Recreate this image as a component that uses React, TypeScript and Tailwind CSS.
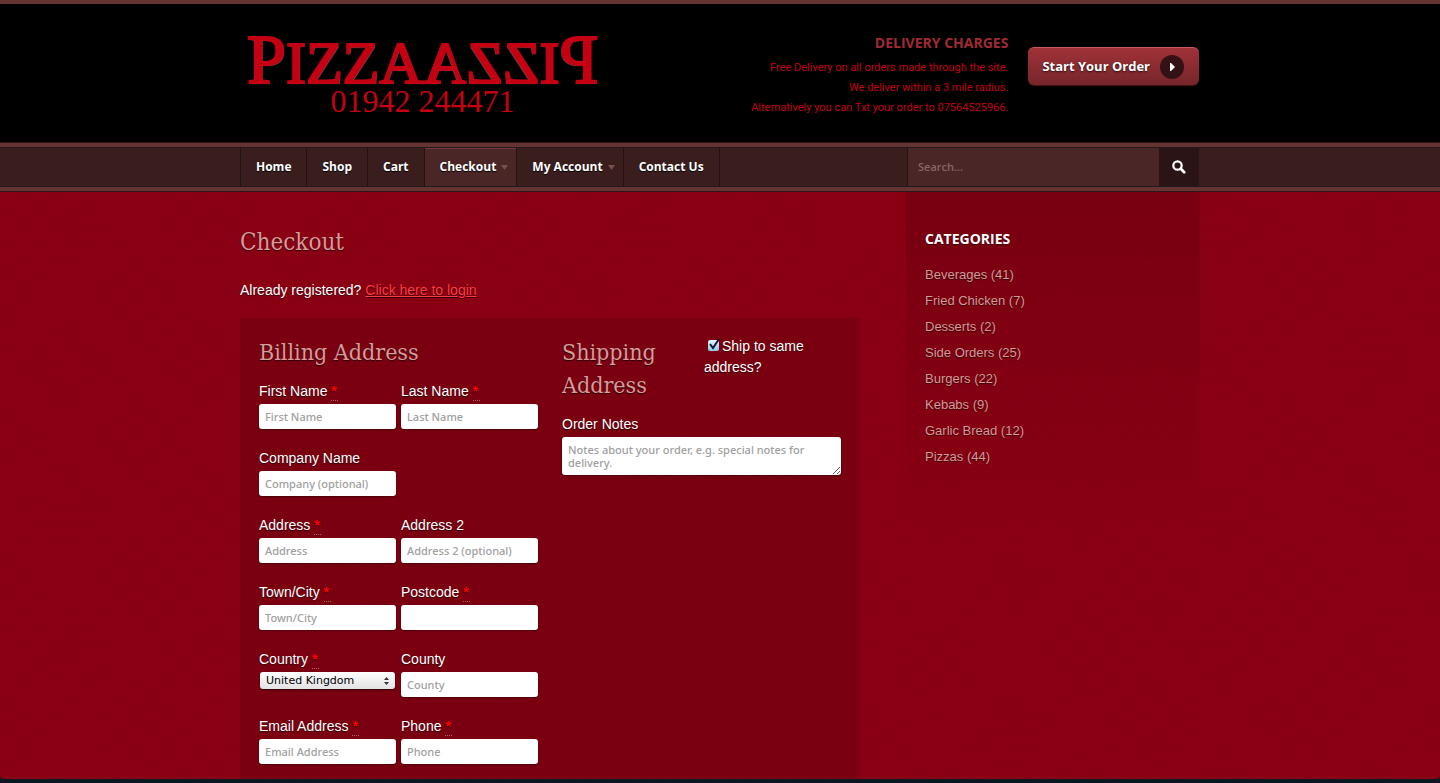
import React from 'react';

interface NavItem {
    label: string;
    active?: boolean;
    menu?: boolean;
}

interface FieldProps {
    id: string;
    label: string;
    placeholder?: string;
    required?: boolean;
}

const navItems: NavItem[] = [
    { label: 'Home' },
    { label: 'Shop' },
    { label: 'Cart' },
    { label: 'Checkout', active: true, menu: true },
    { label: 'My Account', menu: true },
    { label: 'Contact Us' },
];

const categories = [
    { name: 'Beverages', count: 41 },
    { name: 'Fried Chicken', count: 7 },
    { name: 'Desserts', count: 2 },
    { name: 'Side Orders', count: 25 },
    { name: 'Burgers', count: 22 },
    { name: 'Kebabs', count: 9 },
    { name: 'Garlic Bread', count: 12 },
    { name: 'Pizzas', count: 44 },
];

const headingClass =
    "font-['DejaVu_Serif_Condensed','DejaVu_Serif',serif] leading-[33px] text-[#d99a9a] [text-shadow:0_1px_1px_rgba(0,0,0,0.7)]";

const inputClass =
    "block w-full rounded-[3px] bg-white px-[6px] font-['Noto_Sans',sans-serif] text-[11px] font-medium text-[#333] placeholder:text-[#a0a0a0] shadow-[0_1px_2px_rgba(0,0,0,0.4)] outline-none";

const FieldLabel: React.FC<{ id: string; label: string; required?: boolean }> = ({ id, label, required }) => (
    <label htmlFor={id} className="mb-[2px] block leading-[21px]">
        {label}
        {required && (
            <>
                {' '}
                <abbr title="required" className="inline-block h-[20px] w-[7px] border-b border-dotted border-[#b06068] align-top font-bold text-[#f00] no-underline">
                    *
                </abbr>
            </>
        )}
    </label>
);

const Field: React.FC<FieldProps> = ({ id, label, placeholder, required }) => (
    <div>
        <FieldLabel id={id} label={label} required={required} />
        <input id={id} type="text" placeholder={placeholder} className={`${inputClass} h-[25px]`} />
    </div>
);

const Logo = () => (
    <a href="#" className="ml-[7px] block pt-[30px] text-center font-['Liberation_Serif',serif] text-[#c40012]">
        <span className="flex text-[60px] leading-[52px] [-webkit-text-stroke:2px_#c40012] [text-shadow:1px_1px_1px_#777]">
            <span><span className="text-[70px]">P</span>IZZA</span>
            <span className="-scale-x-100"><span className="text-[70px]">P</span>IZZA</span>
        </span>
        <span className="block text-[32px] leading-[24px]">01942 244471</span>
    </a>
);

const Header = () => (
    <header className="border-t-4 border-[#663333] bg-black">
        <div className="mx-auto flex h-[138px] max-w-[960px] items-start">
            <Logo />
            <div className="ml-auto pt-[29px] text-right text-[#c10016]">
                <h2 className="mb-[5px] text-[14px] font-bold leading-[20px] text-[#a02a34]">DELIVERY CHARGES</h2>
                <div className="font-['Roboto',sans-serif] text-[11px] leading-[20px]">
                    <p>Free Delivery on all orders made through the site.</p>
                    <p>We deliver within a 3 mile radius.</p>
                    <p>Alternatively you can Txt your order to 07564525966.</p>
                </div>
            </div>
            <button
                type="button"
                className="mt-[43px] mr-px ml-[20px] flex h-[38px] items-center gap-[10px] rounded-md border-t border-[#c45a5e] bg-linear-to-b from-[#a03238] to-[#76262b] pr-[15px] pl-[14px] text-[13px] font-bold text-white shadow-[0_1px_1px_#4a1518] [text-shadow:0_1px_2px_rgba(0,0,0,0.7)]"
            >
                Start Your Order
                <span className="flex h-6 w-6 items-center justify-center rounded-full bg-[#341114]">
                    <svg width="5" height="8" viewBox="0 0 5 8" fill="#fff">
                        <path d="M0 0h1l4 4-4 4H0z" />
                    </svg>
                </span>
            </button>
        </div>
    </header>
);

const NavBar = () => (
    <div className="border-y border-[#2e1618] bg-[#663333] py-1">
        <div className="border-y border-[#211a1c] bg-[#3a1e1e]">
            <div className="mx-auto flex h-[38px] max-w-[960px] pr-px">
                <nav className="flex border-l border-[#1e1516]">
                    {navItems.map(({ label, active, menu }) => (
                        <a
                            key={label}
                            href="#"
                            className={`relative flex items-center border-r border-r-[#251112] pl-[15px] text-[12px] font-bold text-white [text-shadow:0_1px_1px_#000] ${menu ? 'pr-[20px]' : 'pr-[15px]'} ${active ? 'bg-[#4a2626] shadow-[inset_0_1px_0_#7a3a3c]' : ''}`}
                        >
                            {label}
                            {menu && (
                                <svg className="absolute right-2" width="7" height="5" viewBox="0 0 7 5" fill="#75504f">
                                    <path d="M0 0h7L3.500 5z" />
                                </svg>
                            )}
                        </a>
                    ))}
                </nav>
                <form className="ml-auto flex w-[292px] border-l border-[#251112]" onSubmit={(e) => e.preventDefault()}>
                    <input
                        type="search"
                        aria-label="Search"
                        placeholder="Search..."
                        className="min-w-0 flex-1 bg-[#4a2626] px-[10px] text-[11px] font-semibold text-white outline-none placeholder:text-[#8c6467]"
                    />
                    <button type="submit" aria-label="Search" className="flex w-10 items-center justify-center bg-[#2a1415]">
                        <svg width="14" height="14" viewBox="0 0 14 14" fill="none" stroke="#fff">
                            <circle cx="5.500" cy="5.500" r="4.200" strokeWidth="2.200" />
                            <path d="M8.800 8.800l3.400 3.400" strokeWidth="2.800" strokeLinecap="round" />
                        </svg>
                    </button>
                </form>
            </div>
        </div>
    </div>
);

const CountrySelect = () => (
    <div>
        <FieldLabel id="country" label="Country" required />
        <div className="relative mx-px">
            <select
                id="country"
                className="block h-[17px] w-full appearance-none rounded-[3px] bg-linear-to-b from-white to-[#e2e2e2] px-[6px] font-['DejaVu_Sans',sans-serif] text-[11px] leading-[17px] text-black shadow-[0_1px_2px_rgba(0,0,0,0.6)]"
            >
                <option>United Kingdom</option>
            </select>
            <svg className="pointer-events-none absolute top-[5px] right-[6px]" width="5" height="8" viewBox="0 0 5 8" fill="#333">
                <path d="M2.500 0L5 3H0zM2.500 8L0 5h5z" />
            </svg>
        </div>
    </div>
);

const CheckoutForm = () => (
    <form className="grid grid-cols-2 items-start gap-x-6 bg-black/11 px-[19px] pt-[18px] pb-[15px]">
        <section>
            <h2 className={`${headingClass} mb-[12px] text-[23px]`}>Billing Address</h2>
            <div className="grid grid-cols-2 gap-x-[5px] gap-y-[19px]">
                <Field id="first-name" label="First Name" placeholder="First Name" required />
                <Field id="last-name" label="Last Name" placeholder="Last Name" required />
                <Field id="company" label="Company Name" placeholder="Company (optional)" />
                <div />
                <Field id="address" label="Address" placeholder="Address" required />
                <Field id="address-2" label="Address 2" placeholder="Address 2 (optional)" />
                <Field id="city" label="Town/City" placeholder="Town/City" required />
                <Field id="postcode" label="Postcode" required />
                <CountrySelect />
                <Field id="county" label="County" placeholder="County" />
                <Field id="email" label="Email Address" placeholder="Email Address" required />
                <Field id="phone" label="Phone" placeholder="Phone" required />
            </div>
        </section>
        <section>
            <div className="mb-[12px] grid grid-cols-2 gap-x-[5px]">
                <h2 className={`${headingClass} text-[23px]`}>Shipping Address</h2>
                <label className="leading-[21px]">
                    <span className="relative mr-[3px] ml-[4px] inline-block h-[11px] w-[11px]">
                        <input
                            type="checkbox"
                            defaultChecked
                            className="peer block h-[11px] w-[11px] appearance-none rounded-[2px] bg-linear-to-b from-[#e4f3fd] to-[#8fc4ee]"
                        />
                        <svg
                            className="pointer-events-none absolute bottom-px left-0 hidden peer-checked:block"
                            width="12"
                            height="12"
                            viewBox="0 0 12 12"
                            fill="none"
                            stroke="#111c30"
                            strokeWidth="2"
                        >
                            <path d="M2 6l3 4L11 1" />
                        </svg>
                    </span>
                    Ship to same address?
                </label>
            </div>
            <FieldLabel id="notes" label="Order Notes" />
            <textarea
                id="notes"
                placeholder="Notes about your order, e.g. special notes for delivery."
                className={`${inputClass} h-[38px] resize py-[6px] leading-[13px]`}
            />
        </section>
    </form>
);

const Sidebar = () => (
    <aside className="h-[340px] w-[294px] bg-linear-to-b from-black/13 to-transparent pt-[36px] pl-[19px]">
        <h2 className="mb-[13px] font-['Open_Sans',sans-serif] text-[14px] font-bold leading-[21px] text-white [text-shadow:0_1px_1px_rgba(0,0,0,0.5)]">
            CATEGORIES
        </h2>
        <ul className="text-[13px] leading-[26px] text-[#d69a98] [text-shadow:0_1px_1px_rgba(0,0,0,0.6)]">
            {categories.map(({ name, count }) => (
                <li key={name}>
                    <a href="#">{name}</a> ({count})
                </li>
            ))}
        </ul>
    </aside>
);

export default function App() {
    return (
        <div className="min-h-screen bg-[#0b1722] pb-1 font-['Open_Sans',sans-serif]">
            <div className="overflow-hidden rounded-b-[4px] bg-[#8c0013] bg-[repeating-linear-gradient(45deg,rgba(0,0,0,0.030)_0_1px,transparent_1px_3px),repeating-linear-gradient(-45deg,rgba(0,0,0,0.030)_0_1px,transparent_1px_3px)]">
                <Header />
                <NavBar />
                <div className="mx-auto flex max-w-[960px] items-start justify-between font-['Liberation_Sans',sans-serif]">
                    <main className="w-[620px] pt-[34px] text-[14px] text-white [text-shadow:0_1px_1px_rgba(0,0,0,0.6)]">
                        <h1 className={`${headingClass} text-[24px]`}>Checkout</h1>
                        <p className="mt-[21px] mb-[17px] leading-[21px]">
                            Already registered?{' '}
                            <a href="#" className="text-[#ff3b42] underline">Click here to login</a>
                        </p>
                        <CheckoutForm />
                    </main>
                    <Sidebar />
                </div>
            </div>
        </div>
    );
}
